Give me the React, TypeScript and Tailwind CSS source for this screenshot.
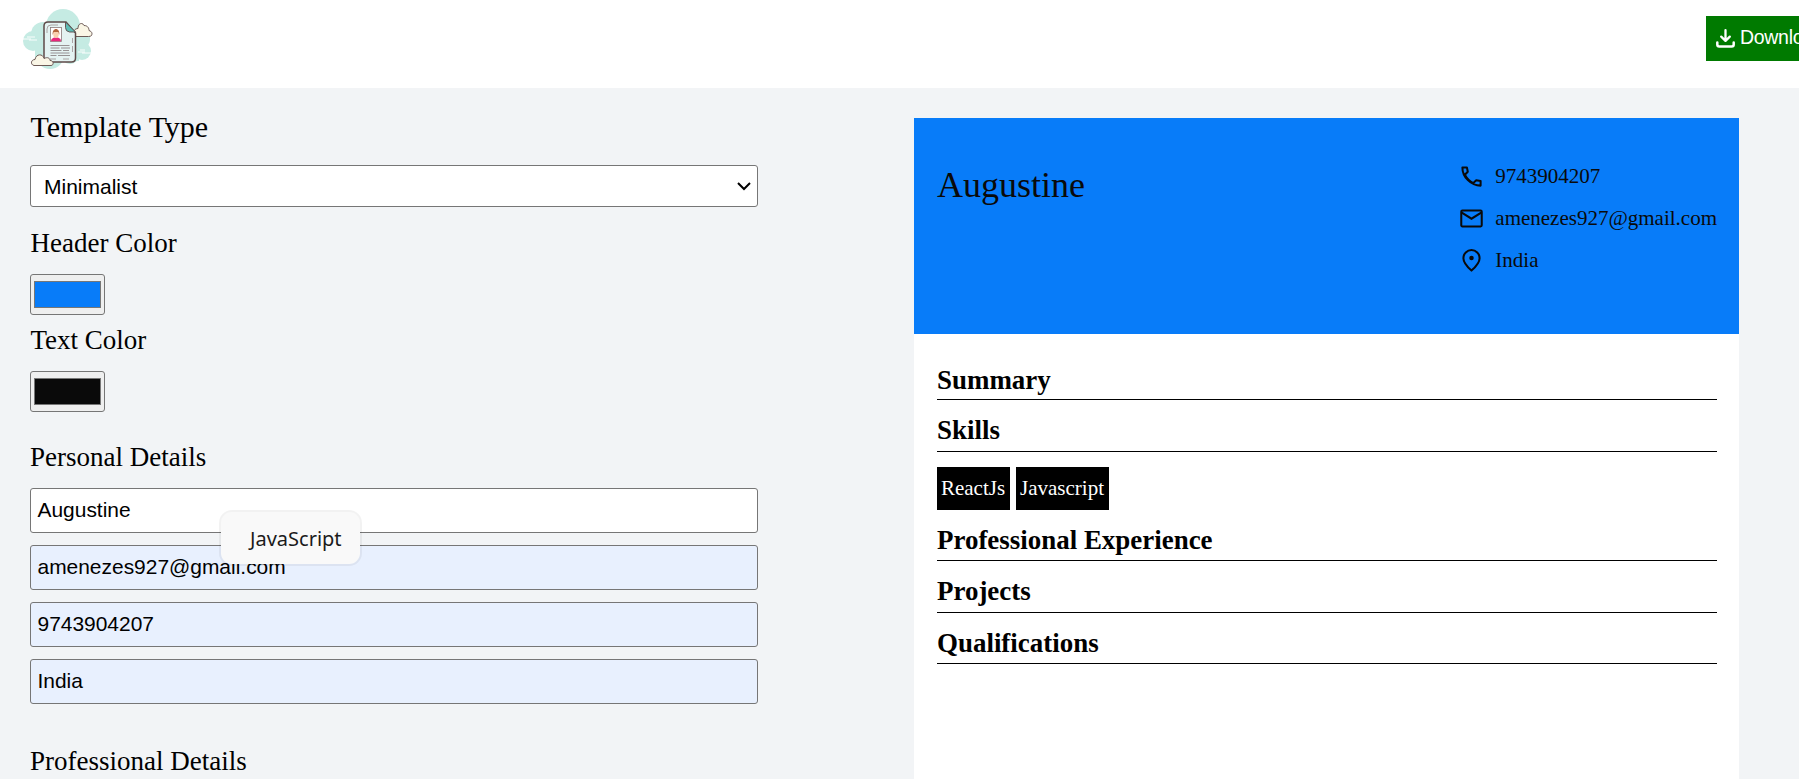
import type { ReactNode } from "react";

const details = [
  { value: "Augustine", filled: false },
  { value: "amenezes927@gmail.com", filled: true },
  { value: "9743904207", filled: true },
  { value: "India", filled: true },
];

function Logo() {
  return (
    <svg className="h-[60px] w-[72px]" viewBox="0 0 72 60" fill="none">
      <g fill="#c5ebe3">
        <circle cx="41" cy="17" r="17" />
        <circle cx="21" cy="25" r="12" />
        <circle cx="11" cy="32" r="10" />
        <circle cx="57" cy="30" r="11" />
        <circle cx="60" cy="42" r="9" />
        <circle cx="28" cy="46" r="14" />
        <circle cx="48" cy="46" r="9" />
        <path d="M13 20h44v32H13z" />
      </g>
      <path d="M0 30h9M5 28h8M7 31h8M56 43h7M58 41h5M60 44h9" stroke="#fff" strokeWidth=".9" />
      <path d="M52 27.500c-2-5 1-8 4-8 0-6 5-6 6-3 4 0 5 3 5 5 3 1 3.500 3 2.500 5q-1 1-3 1z" fill="#faf6e6" stroke="#6d5a56" />
      <path d="M26 13h18l9.500 11v25q0 4-4 4H26q-4 0-4-4V17q0-4 4-4z" fill="#e4f3f2" stroke="#5d4a48" strokeWidth="1.500" />
      <path d="M43.500 13v5.500q0 4 4 4.500h6z" fill="#5dbdb5" stroke="#5d4a48" strokeWidth=".9" />
      <path d="M25 24v-4q0-4 4-4h7M50.500 29v5M50.500 37v6M47 50h-6M34 50h-6" stroke="#9a8f90" strokeWidth=".8" />
      <rect x="28.500" y="18.500" width="11" height="14" fill="#fff" stroke="#8a7a7a" strokeWidth=".8" />
      <path d="M29 32.300c0-3 3-4 5-4s5 1 5 4z" fill="#e8277c" />
      <ellipse cx="34" cy="25" rx="2.800" ry="4" fill="#f9cfae" />
      <path d="M30.700 26c-1-8 7.600-8 6.600 0l-1-3h-4.600z" fill="#b5653c" />
      <path d="M28.500 36.500h19M28.500 39h9M39 39h9M28.500 41.500h11M41 41.500h6M28.500 44h19M28.500 46.500h6M36 46.500h12" stroke="#8d8788" strokeWidth=".9" />
      <path d="M12 56.500c-4-1-3-6 1-6 1-6 8-6 9-1 4-2 6 0 6 2 4 0 4 5 1 5z" fill="#faf6e6" stroke="#6d5a56" />
    </svg>
  );
}

function DownloadIcon() {
  return (
    <svg className="mr-[5px] size-[19px] shrink-0" viewBox="0 0 19 19" fill="none" stroke="currentColor" strokeWidth="2.500" strokeLinecap="round" strokeLinejoin="round">
      <path d="M1.300 13.500v2q0 2 2 2h12.400q2 0 2-2v-2" />
      <path d="M9.500 1.200v10M5.200 7.600l4.300 4.300 4.300-4.300" strokeWidth="2.300" />
    </svg>
  );
}

function PhoneIcon() {
  return (
    <svg className="size-[27px]" viewBox="0 0 24 24" fill="none" stroke="currentColor" strokeWidth="1.800" strokeLinejoin="round">
      <path d="M3.900 3.900h4l.8 3.900-2.600 2.700c1.700 3.200 4 5.700 7.400 7.400l2.700-2.600 3.900.8v4C11.500 20.100 3.900 12.500 3.900 3.900z" />
    </svg>
  );
}

function MailIcon() {
  return (
    <svg className="size-[27px]" viewBox="0 0 24 24" fill="none" stroke="currentColor" strokeWidth="1.800">
      <rect x="2.900" y="4.900" width="18.200" height="14.200" rx="1" />
      <path d="M3 6.500l9 5.700 9-5.700" />
    </svg>
  );
}

function PinIcon() {
  return (
    <svg className="size-[27px]" viewBox="0 0 24 24" fill="none" stroke="currentColor" strokeWidth="1.800">
      <path d="M12 20.900c-3.800-3.400-7.200-7-7.200-11a7.200 7.200 0 0 1 14.400 0c0 4-3.400 7.600-7.200 11z" />
      <circle cx="12" cy="9.800" r="2" fill="currentColor" stroke="none" />
    </svg>
  );
}

function SectionTitle({ children, className }: { children: ReactNode; className: string }) {
  return (
    <h2 className={"flex items-end border-b border-black text-[26.950px] leading-[31px] font-bold " + className}>
      {children}
    </h2>
  );
}

function ColorField({ label, swatch }: { label: string; swatch: string }) {
  return (
    <div>
      <div className="h-[30px] pl-[0.500px] text-[27px] leading-[30px]">{label}</div>
      <div className="mt-[16px] h-[41px] w-[75px] rounded-[3px] border border-[#767676] bg-[#efefef] px-[3px] py-[6px]">
        <div className={"h-full border border-[#777] " + swatch} />
      </div>
    </div>
  );
}

export default function App() {
  return (
    <div className="relative h-[779px] w-full overflow-hidden bg-[#f2f4f6] font-['Liberation_Serif',serif] text-black">
      <header className="flex h-[88px] justify-between overflow-hidden bg-white pl-[22px]">
        <div className="pt-[9px]"><Logo /></div>
        <div className="w-[93px] pt-[16px]">
          <button className="flex h-[45px] w-[142px] items-center bg-[#007a00] pb-px pl-[10px] font-['Liberation_Sans',sans-serif] text-[19.500px] tracking-[-0.300px] whitespace-nowrap text-white">
            <DownloadIcon />
            Download
          </button>
        </div>
      </header>

      <main className="flex">
        <section className="ml-[30px] w-[728px] pt-[22px]">
          <h1 className="h-[34px] pl-[0.500px] text-[30px] leading-[34px]">Template Type</h1>
          <div className="mt-[21px] mb-[20px] flex h-[42px] items-center justify-between rounded-[3px] border border-[#767676] bg-white pr-[6px] pl-[13px] font-['Liberation_Sans',sans-serif] text-[21px]">
            <span className="pt-[2px]">Minimalist</span>
            <svg className="h-[10px] w-[14px]" viewBox="0 0 14 10" fill="none" stroke="#000" strokeWidth="2">
              <path d="M1 2l6 6 6-6" />
            </svg>
          </div>
          <div className="flex flex-col gap-[10px] pt-px">
            <ColorField label="Header Color" swatch="bg-[#087cf9]" />
            <ColorField label="Text Color" swatch="bg-[#0a0a0a]" />
          </div>
          <h2 className="mt-[30px] h-[30px] text-[27px] leading-[30px]">Personal Details</h2>
          <div className="mt-[16px] flex flex-col gap-[12px]">
            {details.map((d) => (
              <div
                key={d.value}
                className={
                  "flex h-[45px] items-center rounded-[3px] border border-[#767676] pb-[2px] pl-[6.500px] font-['Liberation_Sans',sans-serif] text-[20.950px] " +
                  (d.filled ? "bg-[#e8f0fe]" : "bg-white")
                }
              >
                {d.value}
              </div>
            ))}
          </div>
          <h2 className="mt-[42px] h-[30px] text-[27px] leading-[30px]">Professional Details</h2>
        </section>

        <section className="mt-[30px] ml-[156px] h-[680px] w-[825px] bg-white">
          <div className="flex h-[216px] justify-between bg-[#087cf9] pr-[22px] pl-[23px] text-[#0a0a0a]">
            <div className="pt-[47px] text-[36px] leading-[40px]">Augustine</div>
            <div className="flex flex-col pt-[37px] text-[21px]">
              <div className="flex h-[42px] items-center gap-[10.500px]">
                <PhoneIcon />
                <span className="pt-[2px]">9743904207</span>
              </div>
              <div className="flex h-[42px] items-center gap-[10.500px]">
                <MailIcon />
                <span className="pt-[2px]">amenezes927@gmail.com</span>
              </div>
              <div className="flex h-[42px] items-center gap-[10.500px]">
                <PinIcon />
                <span className="pt-[2px]">India</span>
              </div>
            </div>
          </div>
          <div className="pr-[22px] pl-[23px]">
            <SectionTitle className="mt-[14px] h-[52px] pb-[3px]">Summary</SectionTitle>
            <SectionTitle className="h-[52px] pb-[5px]">Skills</SectionTitle>
            <div className="mt-[15px] flex gap-[6px] text-[21px] text-white">
              <span className="flex h-[43px] w-[73px] items-center justify-center bg-black pt-px pr-px">ReactJs</span>
              <span className="flex h-[43px] w-[93px] items-center justify-center bg-black pt-px pr-px">Javascript</span>
            </div>
            <SectionTitle className="h-[51px] pb-[4px]">Professional Experience</SectionTitle>
            <SectionTitle className="h-[52px] pb-[5px]">Projects</SectionTitle>
            <SectionTitle className="h-[51px] pb-[4px]">Qualifications</SectionTitle>
          </div>
        </section>
      </main>

      <div className="absolute top-[510px] left-[219px] flex h-[56px] w-[143px] items-center rounded-[13px] border-2 border-black/5 bg-[#f9f9f9] bg-clip-padding pt-[2px] pl-[29px] font-['Noto_Sans',sans-serif] text-[20px] text-[#1b1b1b]">
        JavaScript
      </div>
    </div>
  );
}
